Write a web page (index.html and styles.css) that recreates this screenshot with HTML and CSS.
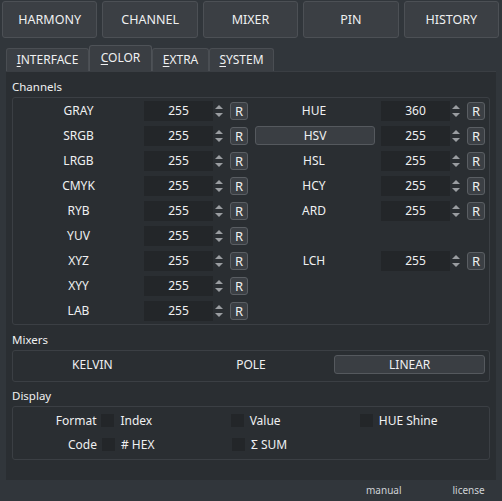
FILE: index.html
```html
<!DOCTYPE html>
<html lang="en">
<head>
  <meta charset="UTF-8">
  <title>Color Settings</title>
  <link rel="stylesheet" href="styles.css">
</head>
<body>

<div class="topbar">
  <button class="top-btn">HARMONY</button>
  <button class="top-btn">CHANNEL</button>
  <button class="top-btn">MIXER</button>
  <button class="top-btn">PIN</button>
  <button class="top-btn">HISTORY</button>
</div>

<div class="tabs">
  <div class="tab t-interface"><u>I</u>NTERFACE</div>
  <div class="tab t-color active"><u>C</u>OLOR</div>
  <div class="tab t-extra"><u>E</u>XTRA</div>
  <div class="tab t-system"><u>S</u>YSTEM</div>
</div>

<div class="panel">
  <div class="group-title">Channels</div>
  <div class="group channels">
    <div class="col">
      <div class="row"><span class="lbl">GRAY</span><div class="spin">255</div><div class="arrows"><i class="up"></i><i class="down"></i></div><button class="r">R</button></div>
      <div class="row"><span class="lbl">SRGB</span><div class="spin">255</div><div class="arrows"><i class="up"></i><i class="down"></i></div><button class="r">R</button></div>
      <div class="row"><span class="lbl">LRGB</span><div class="spin">255</div><div class="arrows"><i class="up"></i><i class="down"></i></div><button class="r">R</button></div>
      <div class="row"><span class="lbl">CMYK</span><div class="spin">255</div><div class="arrows"><i class="up"></i><i class="down"></i></div><button class="r">R</button></div>
      <div class="row"><span class="lbl">RYB</span><div class="spin">255</div><div class="arrows"><i class="up"></i><i class="down"></i></div><button class="r">R</button></div>
      <div class="row"><span class="lbl">YUV</span><div class="spin">255</div><div class="arrows"><i class="up"></i><i class="down"></i></div><button class="r">R</button></div>
      <div class="row"><span class="lbl">XYZ</span><div class="spin">255</div><div class="arrows"><i class="up"></i><i class="down"></i></div><button class="r">R</button></div>
      <div class="row"><span class="lbl">XYY</span><div class="spin">255</div><div class="arrows"><i class="up"></i><i class="down"></i></div><button class="r">R</button></div>
      <div class="row"><span class="lbl">LAB</span><div class="spin">255</div><div class="arrows"><i class="up"></i><i class="down"></i></div><button class="r">R</button></div>
    </div>
    <div class="col right">
      <div class="row"><span class="lbl">HUE</span><div class="spin">360</div><div class="arrows"><i class="up"></i><i class="down"></i></div><button class="r">R</button></div>
      <div class="row"><span class="lbl"><button class="hsv">HSV</button></span><div class="spin">255</div><div class="arrows"><i class="up"></i><i class="down"></i></div><button class="r">R</button></div>
      <div class="row"><span class="lbl">HSL</span><div class="spin">255</div><div class="arrows"><i class="up"></i><i class="down"></i></div><button class="r">R</button></div>
      <div class="row"><span class="lbl">HCY</span><div class="spin">255</div><div class="arrows"><i class="up"></i><i class="down"></i></div><button class="r">R</button></div>
      <div class="row"><span class="lbl">ARD</span><div class="spin">255</div><div class="arrows"><i class="up"></i><i class="down"></i></div><button class="r">R</button></div>
      <div class="row"></div>
      <div class="row"><span class="lbl">LCH</span><div class="spin">255</div><div class="arrows"><i class="up"></i><i class="down"></i></div><button class="r">R</button></div>
    </div>
  </div>

  <div class="group-title">Mixers</div>
  <div class="group mixers">
    <div class="mix">KELVIN</div>
    <div class="mix">POLE</div>
    <div class="mix"><button class="mix-btn">LINEAR</button></div>
  </div>

  <div class="group-title">Display</div>
  <div class="group display">
    <div class="drow">
      <span class="dlbl">Format</span>
      <span class="opt"><i class="box"></i>Index</span>
      <span class="opt"><i class="box"></i>Value</span>
      <span class="opt"><i class="box"></i>HUE Shine</span>
    </div>
    <div class="drow">
      <span class="dlbl">Code</span>
      <span class="opt"><i class="box"></i># HEX</span>
      <span class="opt"><i class="box"></i>Σ SUM</span>
    </div>
  </div>
</div>

<div class="footer">
  <span class="link">manual</span>
  <span class="link">license</span>
</div>

</body>
</html>
```

FILE: styles.css
```css
body {
  margin: 0;
  background: #31363b;
  color: #eff0f1;
  font-family: "Noto Sans", "Open Sans", sans-serif;
  font-size: 12px;
  width: 502px;
  height: 501px;
  overflow: hidden;
}
button {
  font-family: inherit;
  font-size: 12px;
  color: #eff0f1;
}
.topbar {
  display: flex;
  gap: 5px;
  padding: 1px 3px 0 2px;
}
.top-btn {
  flex: 1;
  height: 37px;
  background: #3b3f44;
  border: 1px solid #4c5055;
  border-radius: 3px;
  font-size: 12.5px;
}
.tabs {
  display: flex;
  align-items: flex-end;
  margin: 7px 0 0 6px;
  height: 26px;
}
.tab {
  box-sizing: border-box;
  height: 23px;
  line-height: 22px;
  background: #3b3f44;
  border: 1px solid #4a4e53;
  border-bottom: none;
  border-radius: 3px 3px 0 0;
  font-size: 12px;
  text-align: center;
}
.t-interface { width: 83px; }
.t-color { width: 63px; }
.t-extra { width: 57px; }
.t-system { width: 65px; }
.tab.active {
  height: 26px;
  line-height: 24px;
  background: #3a3e43;
  border-color: #4e5257;
}
.tab u { text-underline-offset: 2px; }
.panel {
  margin: 0 6px;
  height: 409px;
  background: #2a2e32;
  border-top: 1px solid #3a3e43;
  padding: 7px 6px 0 6px;
  box-sizing: border-box;
}
.group-title {
  font-size: 11.5px;
  height: 16px;
  line-height: 16px;
  margin-bottom: 2px;
}
.group {
  border: 1px solid #3b3f44;
  border-radius: 3px;
}
.channels {
  display: flex;
  padding: 0 0 1px 0;
  margin-bottom: 7px;
}
.col {
  width: 238px;
  display: flex;
  flex-direction: column;
}
.row {
  height: 25px;
  flex-shrink: 0;
  display: flex;
  align-items: center;
}
.lbl {
  width: 131px;
  text-align: center;
}
.right .lbl {
  width: 126px;
  padding-right: 4px;
}
.hsv {
  display: block;
  width: 120px;
  height: 19px;
  background: #3a3e43;
  border: 1px solid #55595e;
  border-radius: 3px;
  margin-left: 4px;
  padding: 0;
}
.spin {
  width: 69px;
  height: 20px;
  background: #232629;
  text-align: center;
  line-height: 20px;
}
.arrows {
  width: 12px;
  height: 20px;
  display: flex;
  flex-direction: column;
  align-items: center;
  justify-content: center;
  gap: 4px;
}
.arrows i {
  width: 0;
  height: 0;
  border-left: 4px solid transparent;
  border-right: 4px solid transparent;
}
.arrows .up { border-bottom: 4px solid #9a9da1; }
.arrows .down { border-top: 4px solid #9a9da1; }
.r {
  margin-left: 5px;
  width: 18px;
  height: 18px;
  padding: 0;
  background: #3b3f44;
  border: 1px solid #5a5e63;
  border-radius: 3px;
  font-size: 13px;
  line-height: 16px;
}
.mixers {
  display: flex;
  height: 32px;
  padding-top: 4px;
  box-sizing: border-box;
  margin-bottom: 6px;
}
.mix {
  flex: 1;
  text-align: center;
  line-height: 19px;
}
.mix-btn {
  width: 151px;
  height: 19px;
  padding: 0;
  background: #3a3e43;
  border: 1px solid #55595e;
  border-radius: 3px;
}
.display {
  height: 54px;
  padding-top: 1px;
  box-sizing: border-box;
}
.drow {
  display: flex;
  align-items: center;
  height: 24px;
}
.dlbl {
  width: 84px;
  text-align: right;
  margin-right: 5px;
}
.opt {
  display: flex;
  align-items: center;
  width: 130px;
}
.box {
  width: 13px;
  height: 13px;
  background: #232629;
  margin-right: 6px;
}
.footer {
  display: flex;
  height: 20px;
  align-items: center;
  font-size: 10px;
  padding-left: 366px;
}
.link { color: #cfd2d6; }
.link + .link { margin-left: 51px; }
```
